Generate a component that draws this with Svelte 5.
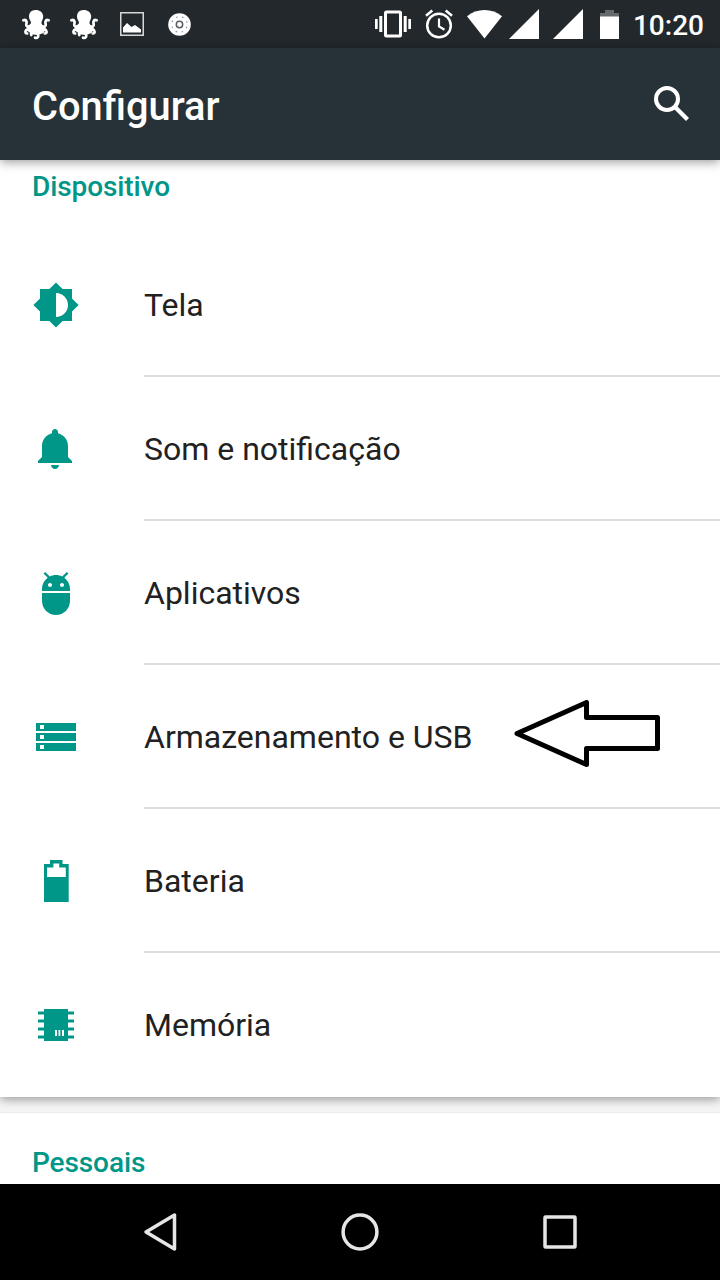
<script lang="ts">
	/**
	 * Settings screen: status bar, app bar, the device section of the
	 * preference list and the system navigation bar.
	 */

	interface Item {
		icon: string;
		label: string;
		marked?: boolean;
	}

	const items: Item[] = [
		{ icon: 'display', label: 'Tela' },
		{ icon: 'bell', label: 'Som e notificação' },
		{ icon: 'android', label: 'Aplicativos' },
		{ icon: 'storage', label: 'Armazenamento e USB', marked: true },
		{ icon: 'battery', label: 'Bateria' },
		{ icon: 'memory', label: 'Memória' }
	];
</script>

{#snippet octopus()}
	<svg class="octopus" width="28" height="30" viewBox="0 0 28 30" aria-hidden="true">
		<path
			fill="#fff"
			d="M13.500 0c4.500 0 7.700 2.700 7.700 6.500 0 2.800-1.600 4.300-1.700 6.200 0 1.300.8 2.300 2.500 2.800l2 3-2.500 4.500-5.500 2-5.500-.5-5-3.500-1-3 2-3c1.500-.5 2.500-1.200 2.500-2.800C8.700 10.800 7 9.500 7 6.500 7 2.800 9.500 0 13.500 0z"
		/>
		<g fill="none" stroke="#fff" stroke-width="2.700" stroke-linecap="round" stroke-linejoin="round">
			<path d="M8.500 17.500c-2.500 0-4.300-1-4.200-3 .1-1.400.6-2.200.1-3.300-.5-1.100-1.800-1.400-3-.9" />
			<path d="M19.500 17.500c2.500 0 4.300-1 4.200-3-.1-1.400-.6-2.200-.1-3.300.5-1.100 1.800-1.400 3-.9" />
			<path d="M9 19.500c-2.500-.3-4.800.1-5.400 1.500-.6 1.300.1 2.500 1.600 2.500" />
			<path d="M19 19.500c2.500-.3 4.800.1 5.400 1.500.6 1.300-.1 2.500-1.600 2.500" />
			<path d="M10.500 22.500c-1.200.5-1.700 1.300-1.200 2.500" />
			<path d="M14 21.500c.5 1.800 2.300 2.300 2.300 4.200 0 1.700-1.600 2.600-3.300 2" />
		</g>
	</svg>
{/snippet}

{#snippet signal()}
	<svg width="30" height="30" viewBox="0 0 30 30" aria-hidden="true">
		<path fill="#fff" d="M0 30L30 0v30z" />
	</svg>
{/snippet}

{#snippet itemIcon(name: string)}
	<svg class="item-icon" width="48" height="48" viewBox="0 0 24 24" aria-hidden="true">
		{#if name === 'display'}
			<path d="M20 15.310L23.310 12 20 8.690V4h-4.690L12 .690 8.690 4H4v4.690L.690 12 4 15.310V20h4.690L12 23.310 15.310 20H20v-4.690zM12 18V6c3.310 0 6 2.690 6 6s-2.690 6-6 6z" />
		{:else if name === 'bell'}
			<path d="M11.500 22c1.100 0 2-.9 2-2h-4c0 1.100.9 2 2 2zm6.500-6v-5.500c0-3.070-2.130-5.640-5-6.320V3.500c0-.83-.67-1.500-1.500-1.500S10 2.670 10 3.500v.68c-2.870.68-5 3.250-5 6.320V16l-2 2v1h17v-1l-2-2z" />
		{:else if name === 'android'}
			<path d="M5 16c0 3.870 3.130 7 7 7s7-3.130 7-7v-4H5v4zM16.120 4.370l2.100-2.100-.82-.83-2.300 2.310C14.160 3.280 13.120 3 12 3s-2.160.28-3.090.75L6.600 1.440l-.82.83 2.100 2.100C6.140 5.640 5 7.680 5 10v1h14v-1c0-2.320-1.140-4.360-2.880-5.630zM9 9c-.55 0-1-.45-1-1s.45-1 1-1 1 .45 1 1-.45 1-1 1zm6 0c-.55 0-1-.45-1-1s.45-1 1-1 1 .45 1 1-.45 1-1 1z" />
		{:else if name === 'storage'}
			<path d="M2 19h20v-4H2v4zm2-3h2v2H4v-2zM2 5v4h20V5H2zm4 3H4V6h2v2zm-4 6h20v-4H2v4zm2-3h2v2H4v-2z" />
		{:else if name === 'battery'}
			<path fill-rule="evenodd" d="M6 22.500V3.500h3V1.500h6.250v2h3.100v19zM7.500 10h9.400V5.200h-3.300V3.300h-2.900v1.900H7.500z" />
		{:else if name === 'memory'}
			<path fill-rule="evenodd" d="M6 4h12v1.250h3v1.500h-3v2.500h3v1.500h-3v2.500h3v1.500h-3v2.500h3v1.500h-3V20H6v-1.250H3v-1.500h3v-2.500H3v-1.500h3v-2.500H3v-1.500h3v-2.500H3v-1.500h3zM11.500 14.500v3h1v-3zM13.250 14.500v3h.9v-3zM15 14.500v3h1v-3z" />
		{/if}
	</svg>
{/snippet}

<div class="screen">
	<header class="status-bar">
		<div class="notifications">
			{@render octopus()}
			{@render octopus()}
			<svg class="picture" width="24" height="24" viewBox="0 0 24 24" aria-hidden="true">
				<path fill="none" stroke="#d5d7d8" stroke-width="1.500" d="M.75.75h22.500v22.500H.75z" />
				<path fill="#fff" d="M3 20.500v-5l4-4.500 4.500 4 3.500-2 6 4.500v3z" />
			</svg>
			<svg width="23" height="23" viewBox="0 0 23 23" aria-hidden="true">
				<circle cx="11.500" cy="11.500" r="11.300" fill="#fff" />
				<circle cx="11.500" cy="11.500" r="3.200" fill="#fff" stroke="#596064" stroke-width="1.500" />
				<circle cx="11.500" cy="11.500" r="7.800" fill="none" stroke="#8b9093" stroke-width="1.100" stroke-dasharray="1.600 4.526" stroke-dashoffset="-2.300" />
			</svg>
		</div>
		<div class="system">
			<svg class="vibrate" width="36" height="28" viewBox="0 0 36 28" aria-hidden="true">
				<rect x="10.500" y="2" width="15" height="24" rx="1" fill="none" stroke="#fff" stroke-width="3" />
				<path fill="#fff" d="M0 9h2.700v10H0zM4.300 6h3v16h-3zM28.700 6h3v16h-3zM33.300 9H36v10h-2.700z" />
			</svg>
			<svg class="alarm" width="28" height="30" viewBox="0 0 28 30" fill="none" stroke="#fff" aria-hidden="true">
				<circle cx="14" cy="16.500" r="11.800" stroke-width="2.500" />
				<path stroke-width="2.200" d="M14 9.500v8l5.500 3.300" />
				<path stroke-width="2.600" d="M1 6.700l6.300-5.100M27 6.700l-6.300-5.100" />
			</svg>
			<svg class="wifi" width="35" height="29" viewBox="0 0 35 29" aria-hidden="true">
				<path fill="#fff" d="M0 6.300C5 2.200 11 0 17.500 0S30 2.200 35 6.300L17.500 28.500z" />
			</svg>
			<span class="signal">{@render signal()}</span>
			<span class="signal">{@render signal()}</span>
			<svg class="charge" width="19" height="29" viewBox="0 0 19 29" aria-hidden="true">
				<path fill="#64696c" d="M5 0h9v3h5v4H0V3h5z" />
				<path fill="#fff" d="M0 6.500h19V29H0z" />
			</svg>
			<time>10:20</time>
		</div>
	</header>

	<div class="app-bar">
		<h1>Configurar</h1>
		<svg width="36" height="36" viewBox="0 0 36 36" fill="none" stroke="#fff" aria-label="Pesquisar">
			<circle cx="13" cy="13" r="11" stroke-width="4" />
			<path stroke-width="4.300" d="M21.500 21.500l12 12" />
		</svg>
	</div>

	<main>
		<section class="card device">
			<h2>Dispositivo</h2>
			<ul>
				{#each items as item}
					<li>
						{@render itemIcon(item.icon)}
						<div class="label">
							<span>{item.label}</span>
							{#if item.marked}
								<svg class="pointer" width="146" height="67" viewBox="0 0 146 67" aria-hidden="true">
									<path
										fill="#fff"
										stroke="#000"
										stroke-width="5"
										stroke-linejoin="round"
										d="M3 33.500l69.500-31v15h71v31h-71v16z"
									/>
								</svg>
							{/if}
						</div>
					</li>
				{/each}
			</ul>
		</section>
		<section class="card personal">
			<h2>Pessoais</h2>
		</section>
	</main>

	<nav>
		<svg width="40" height="40" viewBox="0 0 40 40" aria-label="Voltar">
			<path d="M34.500 3v34L6 20z" />
		</svg>
		<svg width="40" height="40" viewBox="0 0 40 40" aria-label="Início">
			<circle cx="20" cy="20" r="16.900" />
		</svg>
		<svg width="40" height="40" viewBox="0 0 40 40" aria-label="Recentes">
			<rect x="5" y="5" width="30" height="30" rx=".5" />
		</svg>
	</nav>
</div>

<style>
	:global(body) {
		margin: 0;
	}

	.screen {
		display: flex;
		flex-direction: column;
		width: 720px;
		height: 1280px;
		overflow: hidden;
		background: #f5f5f5;
		color: #212121;
		font-family: Roboto, 'Liberation Sans', sans-serif;
	}
	svg {
		display: block;
		flex: none;
	}

	.status-bar {
		display: flex;
		justify-content: space-between;
		box-sizing: border-box;
		height: 48px;
		flex: none;
		padding: 0 16px 0 22px;
		background: #22282c;
		color: #fff;
	}
	.notifications,
	.system {
		display: flex;
		align-items: center;
	}
	.octopus {
		margin-top: 1px;
		margin-right: 20px;
	}
	.picture {
		margin-right: 24px;
		margin-left: 2px;
	}
	.vibrate {
		margin-right: 14px;
	}
	.alarm {
		margin-right: 14px;
	}
	.wifi {
		margin-right: 7px;
	}
	.signal {
		margin-right: 14px;
	}
	.charge {
		margin: 0 14px 0 3px;
	}
	time {
		font-size: 28px;
		font-weight: 500;
		line-height: 48px;
		padding-top: 3px;
	}

	.app-bar {
		display: flex;
		align-items: center;
		justify-content: space-between;
		box-sizing: border-box;
		height: 112px;
		flex: none;
		padding: 0 30px 0 32px;
		background: #273238;
		color: #fff;
		box-shadow: 0 2px 10px rgba(0, 0, 0, 0.4);
		z-index: 1;
	}
	h1 {
		margin: 6px 0 0;
		font-size: 39.8px;
		font-weight: 500;
		line-height: 48px;
	}

	main {
		display: flex;
		flex: 1;
		flex-direction: column;
		gap: 16px;
		min-height: 0;
		overflow: hidden;
	}
	.card {
		flex: none;
		background: #fff;
		box-shadow: 0 2px 10px rgba(0, 0, 0, 0.4);
	}
	.personal {
		height: 100px;
		box-shadow: 0 -1px 1px rgba(0, 0, 0, 0.04);
	}
	h2 {
		margin: 0;
		padding: 0 32px;
		color: #009688;
		font-size: 28px;
		font-weight: 500;
		line-height: 32px;
		letter-spacing: -0.1px;
	}
	.device h2 {
		padding-top: 11px;
		padding-bottom: 30px;
	}
	.personal h2 {
		padding-top: 34px;
	}

	ul {
		margin: 0;
		padding: 0;
		list-style: none;
	}
	li {
		display: flex;
		align-items: center;
		gap: 64px;
		height: 144px;
		padding-left: 32px;
	}
	.item-icon {
		fill: #009688;
	}
	.label {
		display: flex;
		flex: 1;
		align-items: center;
		gap: 41px;
		box-sizing: border-box;
		height: 144px;
		border-bottom: 2px solid #dedede;
		font-size: 32px;
		padding-top: 2px;
	}
	li:last-child .label {
		border-bottom-color: transparent;
	}
	.pointer {
		margin-top: -7px;
	}

	nav {
		display: flex;
		align-items: center;
		justify-content: center;
		gap: 160px;
		height: 96px;
		flex: none;
		background: #000;
		z-index: 1;
	}
	nav svg {
		fill: none;
		stroke: #e6e6e6;
		stroke-width: 3.5;
		stroke-linejoin: round;
	}
</style>
